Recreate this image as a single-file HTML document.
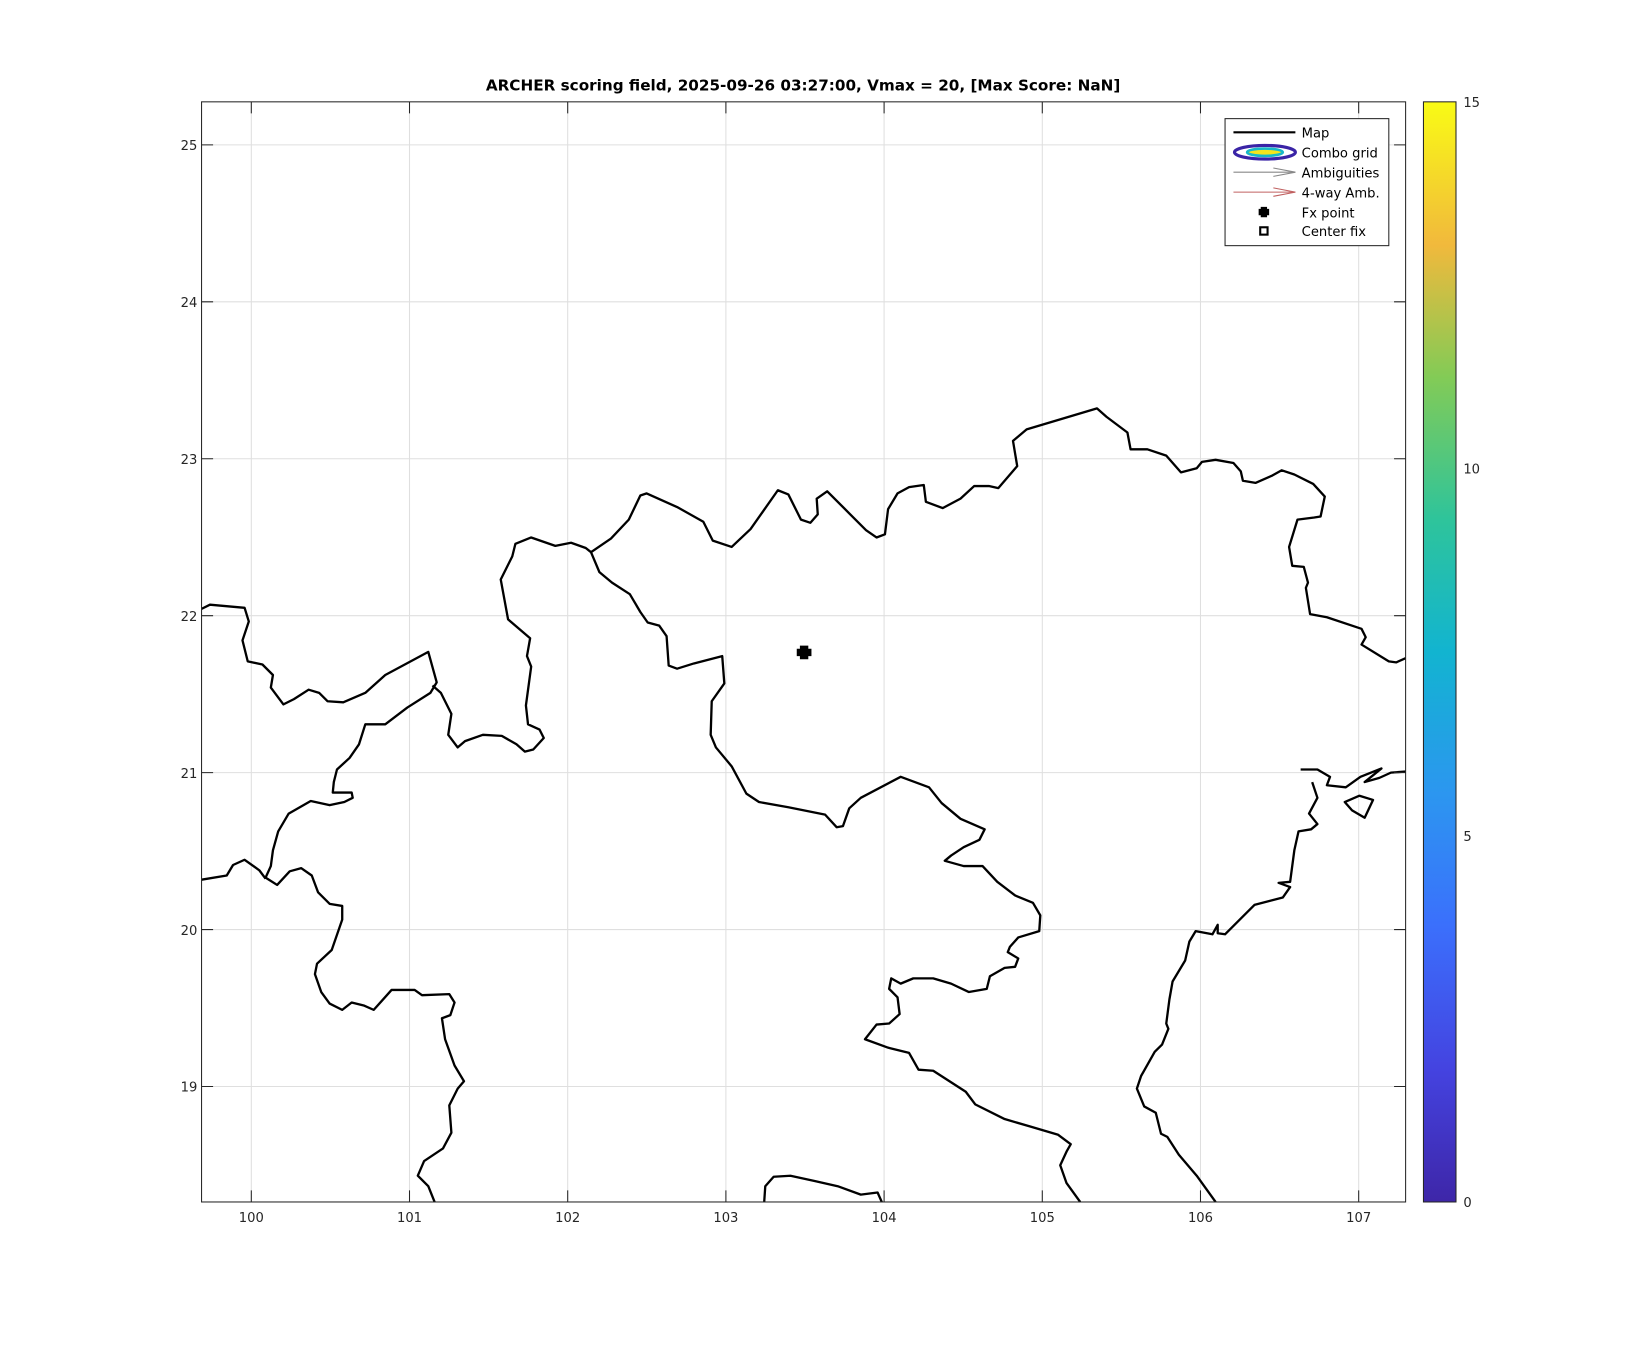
<!DOCTYPE html>
<html><head><meta charset="utf-8"><style>html,body{margin:0;padding:0;background:#fff}svg{display:block}</style></head><body>
<svg width="1646" height="1350" viewBox="0 0 1568 1286" xmlns="http://www.w3.org/2000/svg" font-family="DejaVu Sans, Liberation Sans, sans-serif">
<defs><linearGradient id="cb" x1="0" y1="1" x2="0" y2="0">
<stop offset="0" stop-color="#3e26a8"/><stop offset="0.12" stop-color="#4443e0"/><stop offset="0.25" stop-color="#3b6ffc"/><stop offset="0.37" stop-color="#2c96f0"/><stop offset="0.5" stop-color="#12b4d0"/><stop offset="0.62" stop-color="#2ec49b"/><stop offset="0.75" stop-color="#83cb56"/><stop offset="0.87" stop-color="#f1b93c"/><stop offset="1" stop-color="#f9fb15"/></linearGradient></defs>
<rect width="1568" height="1286" fill="#fff"/>
<g stroke="#dfdfdf" stroke-width="1">
<line x1="239.4" y1="97" x2="239.4" y2="1145"/><line x1="390.1" y1="97" x2="390.1" y2="1145"/><line x1="540.8" y1="97" x2="540.8" y2="1145"/><line x1="691.5" y1="97" x2="691.5" y2="1145"/><line x1="842.2" y1="97" x2="842.2" y2="1145"/><line x1="992.9" y1="97" x2="992.9" y2="1145"/><line x1="1143.6" y1="97" x2="1143.6" y2="1145"/><line x1="1294.3" y1="97" x2="1294.3" y2="1145"/>
<line x1="192" y1="138" x2="1339" y2="138"/><line x1="192" y1="287.5" x2="1339" y2="287.5"/><line x1="192" y1="437" x2="1339" y2="437"/><line x1="192" y1="586.5" x2="1339" y2="586.5"/><line x1="192" y1="736" x2="1339" y2="736"/><line x1="192" y1="885.5" x2="1339" y2="885.5"/><line x1="192" y1="1035" x2="1339" y2="1035"/>
</g>
<g fill="none" stroke="#000" stroke-width="2.2" stroke-linejoin="round">
<path d="M192,580 L200,576 L233,579 L237,592 L231,610 L236,630 L250,633 L260,643 L258,655 L270,671 L280,666 L294,657 L304,660 L312,668 L327,669 L348,660 L367,643 L408,621 L416,650 L410,660 L388,674 L367,690 L348,690 L342,709 L333,722 L321,733 L318,745 L317,755 L335,755 L336,760 L328,764 L314,767 L296,763 L275,775 L265,792 L260,810 L258,825 L253,836 L264,843 L276,830 L287,827 L297,834 L303,850 L314,861 L326,863 L326,876 L316,905 L302,918 L300,928 L306,945 L314,956 L326,962 L335,955 L347,958 L356,962 L373,943 L395,943 L402,948 L428,947 L433,955 L429,967 L421,970 L424,990 L433,1015 L442,1030 L436,1037 L428,1053 L430,1079 L422,1094 L404,1106 L398,1120 L408,1130 L414,1145"/>
<path d="M192,838 L216,834 L222,824 L233,819 L247,829 L253,837"/>
<path d="M412,653 L420,660 L430,680 L427,700 L436,712 L443,706 L460,700 L478,701 L492,709 L500,716 L508,714 L518,703 L514,695 L503,690 L501,672 L506,635 L502,625 L505,608 L484,590 L477,552 L488,530 L491,518 L506,512 L529,520 L544,517 L558,522 L563,526 L582,513 L599,495 L610,472 L616,470 L645,483 L670,497 L679,515 L697,521 L715,504 L741,467 L751,471 L763,495 L772,498 L779,490 L778,475 L788,468 L810,490 L825,505 L835,512 L843,509 L846,485 L855,470 L866,464 L880,462 L882,478 L898,484 L915,475 L928,463 L942,463 L951,465 L969,444 L965,420 L978,409 L1045,389 L1054,397 L1074,412 L1077,428 L1093,428 L1111,434 L1125,450 L1140,446 L1145,440 L1158,438 L1175,441 L1182,449 L1184,458 L1196,460 L1212,453 L1221,448 L1233,452 L1251,461 L1262,473 L1258,492 L1252,493 L1236,495 L1228,521 L1231,539 L1242,540 L1246,555 L1244,560 L1248,585 L1264,588 L1297,599 L1301,607 L1297,614 L1323,630 L1330,631 L1339,627"/>
<path d="M563,526 L571,545 L583,555 L600,566 L610,583 L617,593 L628,596 L635,606 L637,634 L645,637 L661,632 L688,625 L690,651 L678,668 L677,700 L682,712 L697,730 L711,756 L723,764 L751,769 L786,776 L797,788 L803,787 L809,770 L820,760 L858,740 L885,750 L897,765 L915,780 L938,790 L933,800 L918,807 L906,815 L900,820 L918,825 L936,825 L950,840 L967,853 L984,860 L991,872 L990,887 L970,893 L962,902 L960,907 L970,913 L967,921 L957,922 L943,930 L940,942 L923,945 L906,937 L889,932 L870,932 L858,937 L849,932 L847,942 L855,950 L857,966 L847,975 L835,976 L824,990 L846,998 L866,1003 L875,1019 L889,1020 L920,1040 L929,1052 L957,1066 L981,1073 L1008,1081 L1020,1090 L1016,1097 L1010,1110 L1016,1127 L1029,1145"/>
<path d="M1239,733 L1255,733 L1267,740 L1264,748 L1282,750 L1296,740 L1316,732 L1300,745 L1314,741 L1325,736 L1339,735"/>
<path d="M1250,745 L1255,760 L1247,775 L1255,785 L1249,790 L1237,792 L1233,810 L1229,840 L1218,841 L1229,845 L1222,855 L1195,862 L1182,875 L1167,890 L1160,889 L1160,881 L1155,890 L1139,887 L1133,897 L1129,915 L1117,935 L1114,952 L1111,975 L1113,980 L1107,995 L1100,1002 L1087,1025 L1083,1037 L1090,1054 L1101,1060 L1106,1080 L1112,1083 L1123,1100 L1140,1120 L1158,1145"/>
<path d="M1281,764 L1295,758 L1308,762 L1300,779 L1288,772 Z"/>
<path d="M728,1145 L729,1130 L737,1121 L753,1120 L776,1125 L798,1130 L820,1138 L836,1136 L840,1145"/>
</g>
<path d="M762,615 h8 v3 h3 v7 h-3 v3 h-8 v-3 h-3 v-7 h3 z" fill="#000"/>
<rect x="192" y="97" width="1147" height="1048" fill="none" stroke="#262626" stroke-width="1"/>
<g stroke="#262626" stroke-width="1">
<path d="M239.4,1145v-11M390.1,1145v-11M540.8,1145v-11M691.5,1145v-11M842.2,1145v-11M992.9,1145v-11M1143.6,1145v-11M1294.3,1145v-11M239.4,97v11M390.1,97v11M540.8,97v11M691.5,97v11M842.2,97v11M992.9,97v11M1143.6,97v11M1294.3,97v11"/>
<path d="M192,138h11M192,287.5h11M192,437h11M192,586.5h11M192,736h11M192,885.5h11M192,1035h11M1339,138h-11M1339,287.5h-11M1339,437h-11M1339,586.5h-11M1339,736h-11M1339,885.5h-11M1339,1035h-11"/>
</g>
<g font-size="12.5" fill="#262626" text-anchor="middle">
<text x="239.4" y="1164">100</text><text x="390.1" y="1164">101</text><text x="540.8" y="1164">102</text><text x="691.5" y="1164">103</text><text x="842.2" y="1164">104</text><text x="992.9" y="1164">105</text><text x="1143.6" y="1164">106</text><text x="1294.3" y="1164">107</text>
</g>
<g font-size="12.5" fill="#262626" text-anchor="end">
<text x="188" y="143">25</text><text x="188" y="292.5">24</text><text x="188" y="442">23</text><text x="188" y="591.5">22</text><text x="188" y="741">21</text><text x="188" y="890.5">20</text><text x="188" y="1040">19</text>
</g>
<text x="765" y="86" font-size="14.5" font-weight="bold" text-anchor="middle" fill="#000">ARCHER scoring field, 2025-09-26 03:27:00, Vmax = 20, [Max Score: NaN]</text>
<rect x="1356" y="97" width="31" height="1048" fill="url(#cb)" stroke="#262626" stroke-width="1"/>
<g font-size="12.5" fill="#262626">
<text x="1394" y="102">15</text><text x="1394" y="451">10</text><text x="1394" y="801">5</text><text x="1394" y="1150">0</text>
</g>
<rect x="1167" y="113" width="156" height="121" fill="#fff" stroke="#262626" stroke-width="1"/>
<g font-size="12.5" fill="#000">
<line x1="1175" y1="126" x2="1234" y2="126" stroke="#000" stroke-width="2"/>
<text x="1240" y="131">Map</text>
<ellipse cx="1205" cy="145" rx="29" ry="6.5" fill="none" stroke="#3a24a6" stroke-width="3"/>
<ellipse cx="1205" cy="145" rx="17" ry="3.5" fill="#f5e51c" stroke="#18b8c8" stroke-width="2.5"/>
<text x="1240" y="150">Combo grid</text>
<line x1="1175" y1="164" x2="1234" y2="164" stroke="#888" stroke-width="1"/><path d="M1213,160 L1234,164 L1213,168" fill="none" stroke="#888"/>
<text x="1240" y="169">Ambiguities</text>
<line x1="1175" y1="183" x2="1234" y2="183" stroke="#c06060" stroke-width="1"/><path d="M1213,179 L1234,183 L1213,187" fill="none" stroke="#c06060"/>
<text x="1240" y="188">4-way Amb.</text>
<path d="M1201,197 h6 v2 h2 v6 h-2 v2 h-6 v-2 h-2 v-6 h2 z" fill="#000"/>
<text x="1240" y="207">Fx point</text>
<rect x="1200.5" y="216.5" width="7" height="7" fill="none" stroke="#000" stroke-width="2"/>
<text x="1240" y="225">Center fix</text>
</g>
</svg>
</body></html>
